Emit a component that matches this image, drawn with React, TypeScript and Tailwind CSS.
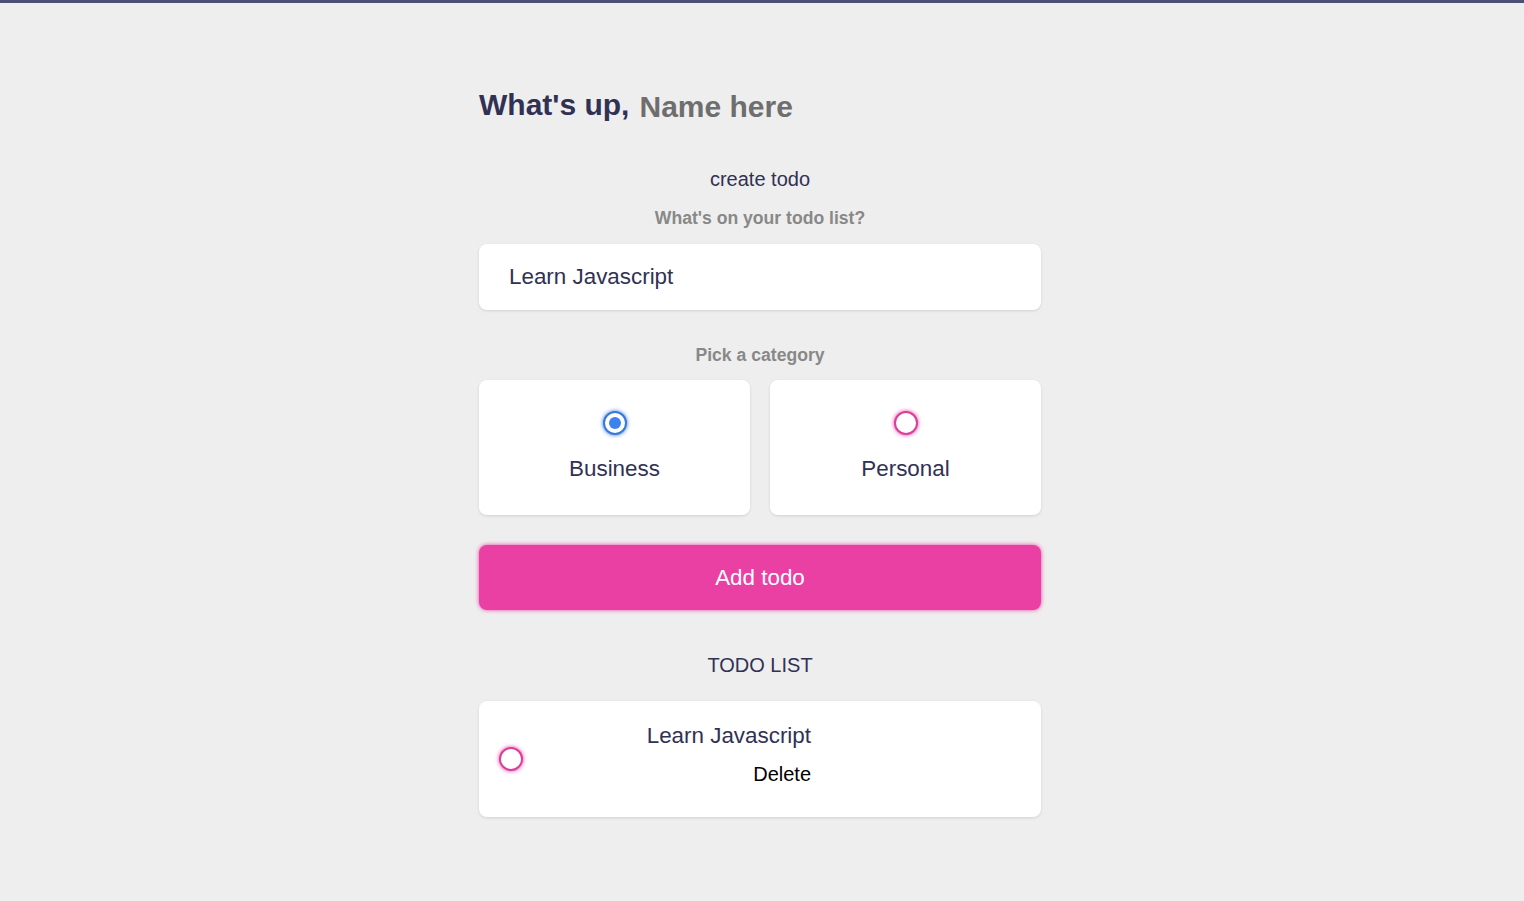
import React from "react";

function Radio({ color, checked }: { color: "blue" | "pink"; checked?: boolean }) {
  if (color === "blue") {
    return (
      <span className="flex h-6 w-6 items-center justify-center rounded-full border-2 border-[#3a78d8] bg-white shadow-[0_0_4px_#3a78d8]">
        {checked && <span className="h-[12px] w-[12px] rounded-full bg-[#3b82f0]" />}
      </span>
    );
  }
  return (
    <span className="flex h-6 w-6 items-center justify-center rounded-full border-2 border-[#d8409a] bg-white shadow-[0_0_4px_#ea40a4]" />
  );
}

export default function App() {
  return (
    <div
      className="min-h-[901px] border-t-[3px] border-[#4a5073] bg-[#eeeeee] pr-[4px] text-[#313154]"
      style={{ fontFamily: '"Liberation Sans", Arial, sans-serif' }}
    >
      <div className="mx-auto flex w-[562px] flex-col pt-[84px]">
        <h2 className="flex items-baseline gap-[10px] text-[30px] font-bold leading-[36px]">
          <span>What's up,</span>
          <span className="translate-y-[2px] text-[#6e6e6e]">Name here</span>
        </h2>

        <h4 className="mt-[44px] text-center text-[20px] leading-[24px]">create todo</h4>
        <h4 className="mt-[17px] text-center text-[17.6px] font-bold leading-[21px] text-[#888888]">
          What's on your todo list?
        </h4>
        <div className="mt-[15px] flex h-[66px] items-center rounded-lg bg-white px-[30px] text-[22.4px] shadow-[0_1px_3px_rgba(0,0,0,0.12)]">
          Learn Javascript
        </div>

        <h4 className="mt-[35px] text-center text-[17.6px] font-bold leading-[21px] text-[#888888]">
          Pick a category
        </h4>
        <div className="mt-[14px] grid grid-cols-2 gap-5">
          <div className="flex h-[135px] flex-col items-center rounded-lg bg-white pt-[31px] shadow-[0_1px_3px_rgba(0,0,0,0.12)]">
            <Radio color="blue" checked />
            <div className="mt-[20px] text-[22.4px] leading-[27px]">Business</div>
          </div>
          <div className="flex h-[135px] flex-col items-center rounded-lg bg-white pt-[31px] shadow-[0_1px_3px_rgba(0,0,0,0.12)]">
            <Radio color="pink" />
            <div className="mt-[20px] text-[22.4px] leading-[27px]">Personal</div>
          </div>
        </div>

        <button className="mt-[30px] flex h-[65px] items-center justify-center rounded-lg bg-[#ea40a4] text-[22.4px] text-white shadow-[0_0_4px_#ea40a4]">
          Add todo
        </button>

        <h3 className="mt-[43px] text-center text-[20px] leading-[24px]">TODO LIST</h3>

        <div className="mt-[24px] flex h-[116px] items-start rounded-lg bg-white px-5 pt-[21px] shadow-[0_1px_3px_rgba(0,0,0,0.12)]">
          <div className="mt-[25px]">
            <Radio color="pink" />
          </div>
          <div className="flex w-[288px] flex-col items-end">
            <div className="text-[22.4px] leading-[27px]">Learn Javascript</div>
            <div className="mt-[13px] text-[20px] leading-[24px] text-black">Delete</div>
          </div>
        </div>
      </div>
    </div>
  );
}
